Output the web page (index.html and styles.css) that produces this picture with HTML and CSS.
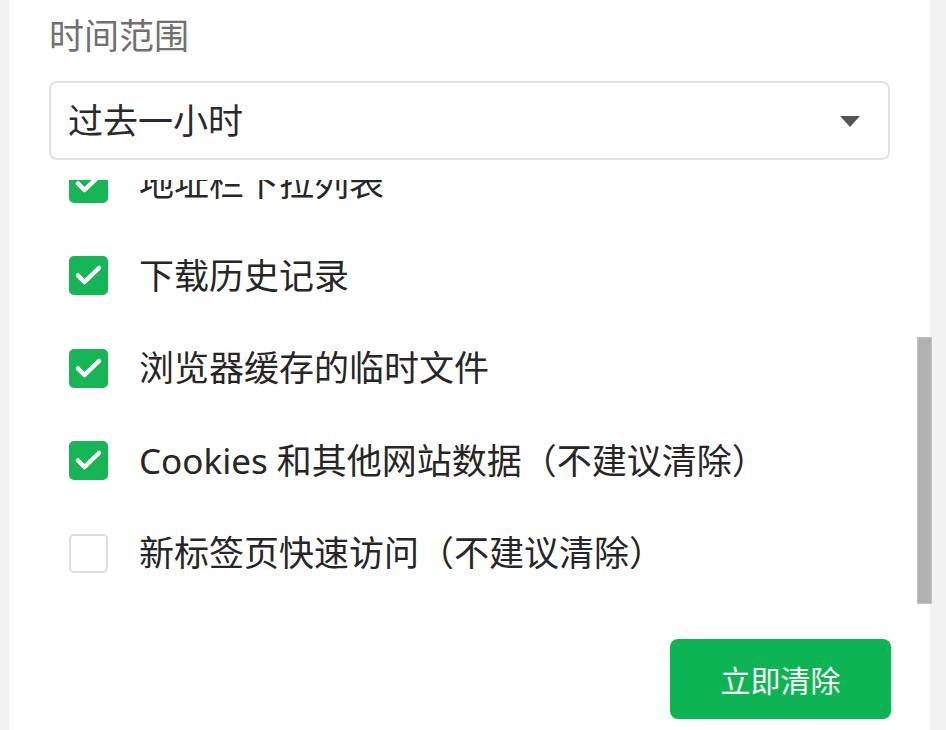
FILE: index.html
```html
<!DOCTYPE html>
<html lang="zh-CN">
<head>
<meta charset="utf-8">
<title>清除浏览数据</title>
<link rel="stylesheet" href="styles.css">
</head>
<body>
<div class="panel">
  <div class="label">时间范围</div>
  <div class="select">
    <span class="select-text">过去一小时</span>
    <svg class="caret" width="20" height="11" viewBox="0 0 20 11"><path d="M0 0H20L10 11Z" fill="#555"/></svg>
  </div>
  <div class="list">
    <div class="list-inner">
      <div class="row"><span class="box on"><svg viewBox="0 0 39 39"><path d="M9 19.5L15.5 26L30 12" fill="none" stroke="#fff" stroke-width="4.5" stroke-linecap="round" stroke-linejoin="round"/></svg></span><span class="txt">地址栏下拉列表</span></div>
      <div class="row"><span class="box on"><svg viewBox="0 0 39 39"><path d="M9 19.5L15.5 26L30 12" fill="none" stroke="#fff" stroke-width="4.5" stroke-linecap="round" stroke-linejoin="round"/></svg></span><span class="txt">下载历史记录</span></div>
      <div class="row"><span class="box on"><svg viewBox="0 0 39 39"><path d="M9 19.5L15.5 26L30 12" fill="none" stroke="#fff" stroke-width="4.5" stroke-linecap="round" stroke-linejoin="round"/></svg></span><span class="txt">浏览器缓存的临时文件</span></div>
      <div class="row"><span class="box on"><svg viewBox="0 0 39 39"><path d="M9 19.5L15.5 26L30 12" fill="none" stroke="#fff" stroke-width="4.5" stroke-linecap="round" stroke-linejoin="round"/></svg></span><span class="txt">Cookies 和其他网站数据（不建议清除）</span></div>
      <div class="row"><span class="box"></span><span class="txt">新标签页快速访问（不建议清除）</span></div>
    </div>
  </div>
  <div class="footer">
    <button class="btn">立即清除</button>
  </div>
  <div class="thumb"></div>
</div>
</body>
</html>
```
FILE: styles.css
```css
html, body {
  margin: 0;
  padding: 0;
  background: #f2f2f2;
  height: 730px;
  overflow: hidden;
}
body {
  font-family: "Noto Sans", "Noto Sans CJK SC", sans-serif;
}
.panel {
  position: relative;
  margin-left: 9px;
  width: 921px;
  height: 730px;
  background: #fff;
  box-sizing: border-box;
  padding: 15px 0 0 40px;
}
.label {
  font-size: 35px;
  line-height: 42px;
  color: #707070;
}
.select {
  margin-top: 24px;
  width: 841px;
  height: 79px;
  box-sizing: border-box;
  border: 2px solid #e1e1e1;
  border-radius: 8px;
  display: flex;
  align-items: center;
  justify-content: space-between;
  padding: 0 28px 0 17px;
}
.select-text {
  font-size: 35px;
  line-height: 42px;
  color: #2a2a2a;
}
.caret {
  display: block;
  margin-top: 1px;
}
.list {
  margin-top: 20px;
  height: 426px;
  overflow: hidden;
}
.list-inner {
  margin-top: -43.25px;
}
.row {
  height: 92.5px;
  display: flex;
  align-items: center;
  padding-left: 20px;
}
.box {
  width: 39px;
  height: 39px;
  box-sizing: border-box;
  border-radius: 5px;
  border: 2px solid #dedede;
  background: #fff;
  flex: none;
  display: flex;
}
.box.on {
  border: none;
  background: #16b556;
}
.box svg {
  width: 39px;
  height: 39px;
  display: block;
}
.txt {
  margin-left: 31px;
  font-size: 35px;
  line-height: 42px;
  color: #262626;
  white-space: nowrap;
}
.footer {
  margin-top: 33px;
  width: 842px;
  display: flex;
  justify-content: flex-end;
}
.btn {
  width: 221px;
  height: 80px;
  border: none;
  border-radius: 8px;
  background: #0db453;
  color: #fff;
  font-family: "Noto Sans CJK SC", sans-serif;
  font-size: 30px;
  padding: 0;
  line-height: 36px;
}
.thumb {
  position: absolute;
  left: 908px;
  top: 337px;
  width: 15px;
  height: 267px;
  box-sizing: border-box;
  background: #b1b1b1;
  border: 1px solid #c4c4c4;
}
```
